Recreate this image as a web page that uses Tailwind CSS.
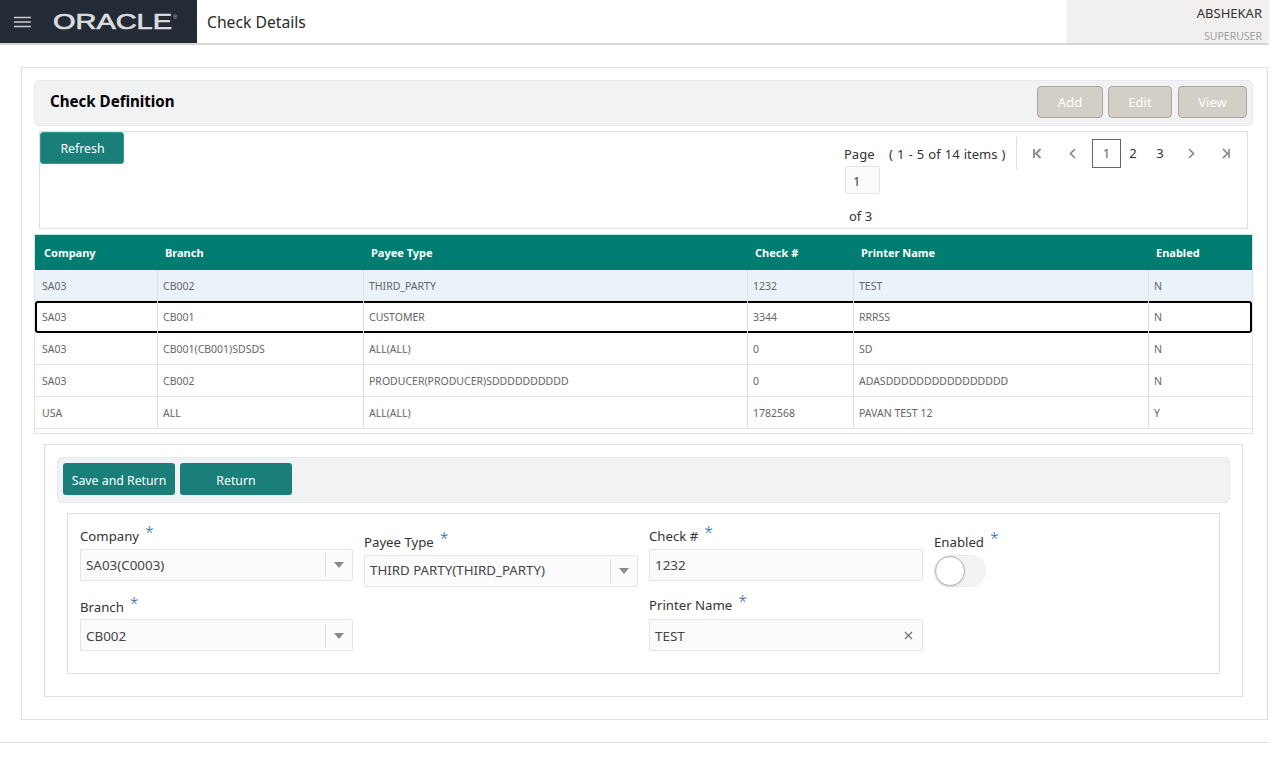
<!DOCTYPE html>
<html lang="en">
<head>
<meta charset="utf-8">
<title>Check Details</title>
<script src="https://cdn.jsdelivr.net/npm/@tailwindcss/browser@4"></script>
</head>
<body class="bg-white h-[782px] w-[1275px] overflow-hidden font-['Noto_Sans',sans-serif] text-[#333]">
<div class="w-[1269px]">
  <header class="flex h-[45px] border-b-2 border-[#d5d5d5]">
    <div class="w-[197px] bg-[#222b36] flex items-center">
      <svg class="ml-[14px] w-[17px] h-[12px]" viewBox="0 0 17 12"><path d="M0 1.5h17M0 6h17M0 10.5h17" stroke="#c9ccd0" stroke-width="1.6"/></svg>
      <svg class="ml-[22px] w-[128px] h-[24px]" viewBox="0 0 128 24"><text x="0" y="19" textLength="119" lengthAdjust="spacingAndGlyphs" font-family="Liberation Sans" font-weight="400" font-size="22" fill="#dcdcdc" stroke="#dcdcdc" stroke-width="0.7">ORACLE</text><text x="120" y="9" font-family="Liberation Sans" font-size="6" fill="#bbbbbb">®</text></svg>
    </div>
    <div class="flex-1 pl-[10px] pt-[9px] text-[15.7px] leading-[26px] text-[#2b2b2b]">Check Details</div>
    <div class="w-[202px] bg-[#f1f0ee] flex flex-col items-end pr-[7px]">
      <div class="text-[13px] leading-[18px] pt-[4px] text-[#333]">ABSHEKAR</div>
      <div class="text-[10.5px] leading-[14px] pt-[7px] text-[#a0a0a0]">SUPERUSER</div>
    </div>
  </header>
  <main class="mt-[22px] ml-[21px] w-[1247px] h-[653px] border border-[#dfdfdf] pt-[12px] pl-[12px]">
    <div class="w-[1219px] h-[46px] bg-[#f1f2f4] border border-[#e9e9ec] rounded-[5px] flex items-center justify-between pl-[15px] pr-[5px]">
      <h1 class="text-[15.1px] font-bold text-black -mt-[3px]">Check Definition</h1>
      <div class="flex gap-[5px] -mt-[2px]">
        <button class="w-[66px] h-[32px] pt-[1px] bg-[#d3cfc6] border border-[#a9a69e] rounded-[4px] text-white text-[13px]">Add</button>
        <button class="w-[64px] h-[32px] pt-[1px] bg-[#d3cfc6] border border-[#a9a69e] rounded-[4px] text-white text-[13px] mr-[1px]">Edit</button>
        <button class="w-[69px] h-[32px] pt-[1px] bg-[#d3cfc6] border border-[#a9a69e] rounded-[4px] text-white text-[13px]">View</button>
      </div>
    </div>
    <section class="mt-[5px] ml-[5px] w-[1209px] h-[98px] border border-[#dfdfdf] flex justify-between">
      <button class="w-[84px] h-[32px] pt-[2px] pl-[1px] bg-[#1b7f79] border border-[#2a9d94] rounded-[3px] text-white text-[12.3px]">Refresh</button>
      <div class="w-[403px] text-[13px] text-[#333] relative">
        <div class="flex h-[33px] mt-[5px]">
          <span class="w-[45px] pt-[7px] leading-[20px]">Page</span>
          <span class="w-[127px] pt-[7px] leading-[20px] [word-spacing:0.7px]">( 1 - 5 of 14 items )</span>
          <div class="w-[16px] border-l border-[#dfdfdf]"></div>
          <div class="flex items-start pt-[2px] text-[#8a8a8a]">
            <svg class="w-[12px] h-[29px]" viewBox="0 0 12 29"><path d="M2 10v9M8.5 10l-4.5 4.5 4.5 4.5" fill="none" stroke="#858585" stroke-width="1.8"/></svg>
            <svg class="ml-[23px] w-[12px] h-[29px]" viewBox="0 0 12 29"><path d="M8 10l-4.5 4.5L8 19" fill="none" stroke="#858585" stroke-width="1.6"/></svg>
            <span class="ml-[13px] w-[29px] h-[29px] border border-[#666] flex items-center justify-center text-[#666]">1</span>
            <span class="w-[24px] h-[29px] flex items-center justify-center text-[#333]">2</span>
            <span class="w-[30px] h-[29px] flex items-center justify-center text-[#333]">3</span>
            <svg class="ml-[10px] w-[12px] h-[29px]" viewBox="0 0 12 29"><path d="M4 10l4.5 4.5L4 19" fill="none" stroke="#858585" stroke-width="1.6"/></svg>
            <svg class="ml-[23px] w-[12px] h-[29px]" viewBox="0 0 12 29"><path d="M3 10l4.5 4.5L3 19M9 10v9" fill="none" stroke="#858585" stroke-width="1.6"/></svg>
          </div>
        </div>
        <div class="ml-[1px] -mt-[4px] w-[35px] h-[28px] bg-[#fbfbfd] border border-[#e4e4e4] rounded-[2px] pl-[7px] leading-[28px] text-[#444]">1</div>
        <div class="ml-[5px] mt-[12px] leading-[20px]">of 3</div>
      </div>
    </section>
    <section class="mt-[5px] w-[1219px] h-[200px] border-b border-x border-[#e2e2e2] border-t border-t-[#c5ebe6] text-[10.5px] text-[#666]">
      <div class="grid grid-cols-[123px_206px_384px_106px_295px_103px] h-[35px] bg-[#007d70] text-white font-bold text-[11px] items-center pt-[2px]">
        <span class="pl-[9px]">Company</span><span class="pl-[7px]">Branch</span><span class="pl-[7px]">Payee Type</span><span class="pl-[7px]">Check #</span><span class="pl-[7px]">Printer Name</span><span class="pl-[7px]">Enabled</span>
      </div>
      <div class="grid grid-cols-[123px_206px_384px_106px_295px_103px] h-[31px] bg-[#e9f3f9] items-center border-b border-[#e6e6e6] [&>span]:h-full [&>span]:flex [&>span]:items-center [&>span]:pl-[5px] [&>span]:pt-[4px] [&>span]:border-r [&>span]:border-[#dedede]">
        <span class="!pl-[7px]">SA03</span><span>CB002</span><span>THIRD_PARTY</span><span>1232</span><span>TEST</span><span class="!border-r-0">N</span>
      </div>
      <div class="relative grid grid-cols-[123px_206px_384px_106px_295px_103px] h-[32px] items-center ring-2 ring-inset ring-black rounded-[3px] [&>span]:h-full [&>span]:flex [&>span]:items-center [&>span]:pl-[5px] [&>span]:pt-[2px] [&>span]:border-r [&>span]:border-[#dedede]">
        <span class="!pl-[7px]">SA03</span><span>CB001</span><span>CUSTOMER</span><span>3344</span><span>RRRSS</span><span class="!border-r-0">N</span>
      </div>
      <div class="grid grid-cols-[123px_206px_384px_106px_295px_103px] h-[32px] items-center border-b border-[#e2e2e2] [&>span]:h-full [&>span]:flex [&>span]:items-center [&>span]:pl-[5px] [&>span]:pt-[2px] [&>span]:border-r [&>span]:border-[#dedede]">
        <span class="!pl-[7px]">SA03</span><span>CB001(CB001)SDSDS</span><span>ALL(ALL)</span><span>0</span><span>SD</span><span class="!border-r-0">N</span>
      </div>
      <div class="grid grid-cols-[123px_206px_384px_106px_295px_103px] h-[32px] items-center border-b border-[#e2e2e2] [&>span]:h-full [&>span]:flex [&>span]:items-center [&>span]:pl-[5px] [&>span]:pt-[2px] [&>span]:border-r [&>span]:border-[#dedede]">
        <span class="!pl-[7px]">SA03</span><span>CB002</span><span>PRODUCER(PRODUCER)SDDDDDDDDDD</span><span>0</span><span>ADASDDDDDDDDDDDDDDDD</span><span class="!border-r-0">N</span>
      </div>
      <div class="grid grid-cols-[123px_206px_384px_106px_295px_103px] h-[32px] items-center border-b border-[#e2e2e2] [&>span]:h-full [&>span]:flex [&>span]:items-center [&>span]:pl-[5px] [&>span]:pt-[2px] [&>span]:border-r [&>span]:border-[#dedede]">
        <span class="!pl-[7px]">USA</span><span>ALL</span><span>ALL(ALL)</span><span>1782568</span><span>PAVAN TEST 12</span><span class="!border-r-0">Y</span>
      </div>
    </section>
    <section class="mt-[10px] ml-[10px] w-[1199px] h-[253px] border border-[#dfdfdf] pt-[12px] pl-[12px]">
      <div class="w-[1173px] h-[46px] bg-[#f1f2f4] border border-[#e9e9ec] rounded-[5px] flex gap-[5px] pt-[5px] pl-[5px]">
        <button class="w-[112px] h-[32px] pt-[4px] bg-[#1b7f79] rounded-[3px] text-white text-[12.3px]">Save and Return</button>
        <button class="w-[112px] h-[32px] pt-[4px] bg-[#1b7f79] rounded-[3px] text-white text-[12.3px]">Return</button>
      </div>
      <div class="mt-[10px] ml-[10px] w-[1153px] h-[161px] border border-[#dfdfdf] pl-[12px] flex text-[13.2px] text-[#333]">
        <div class="w-[284px]">
          <div class="h-[35px] pt-[9px]"><span>Company</span><span class="relative -top-[3px] ml-[6px] text-[#2f6a9e] text-[16px] font-light">*</span></div>
          <div class="w-[273px] h-[32px] bg-[#fbfbfd] border border-[#e4e4e4] rounded-[2px] flex items-center pl-[5px] text-[#444] text-[13.4px]"><span class="flex-1 pt-[1px]">SA03(C0003)</span><span class="w-[27px] h-[24px] border-l border-[#dcdcdc] flex items-center justify-center"><svg class="w-[10px] h-[6px]" viewBox="0 0 10 6"><path d="M0 0h10L5 6z" fill="#8a8a8a"/></svg></span></div>
          <div class="h-[38px] pt-[13px]"><span>Branch</span><span class="relative -top-[3px] ml-[6px] text-[#2f6a9e] text-[16px] font-light">*</span></div>
          <div class="w-[273px] h-[32px] pt-[1px] bg-[#fbfbfd] border border-[#e4e4e4] rounded-[2px] flex items-center pl-[5px] text-[#444] text-[13.4px]"><span class="flex-1 pt-[1px]">CB002</span><span class="w-[27px] h-[24px] border-l border-[#dcdcdc] flex items-center justify-center"><svg class="w-[10px] h-[6px]" viewBox="0 0 10 6"><path d="M0 0h10L5 6z" fill="#8a8a8a"/></svg></span></div>
        </div>
        <div class="w-[285px]">
          <div class="h-[41px] pt-[15px]"><span>Payee Type</span><span class="relative -top-[3px] ml-[6px] text-[#2f6a9e] text-[16px] font-light">*</span></div>
          <div class="w-[274px] h-[32px] bg-[#fbfbfd] border border-[#e4e4e4] rounded-[2px] flex items-center pl-[5px] text-[#444] text-[13.3px]"><span class="flex-1">THIRD PARTY(THIRD_PARTY)</span><span class="w-[27px] h-[24px] border-l border-[#dcdcdc] flex items-center justify-center"><svg class="w-[10px] h-[6px]" viewBox="0 0 10 6"><path d="M0 0h10L5 6z" fill="#8a8a8a"/></svg></span></div>
        </div>
        <div class="w-[285px]">
          <div class="h-[35px] pt-[9px]"><span>Check #</span><span class="relative -top-[3px] ml-[6px] text-[#2f6a9e] text-[16px] font-light">*</span></div>
          <div class="w-[274px] h-[32px] bg-[#fbfbfd] border border-[#e4e4e4] rounded-[2px] flex items-center pl-[5px] text-[#444] text-[13.4px]">1232</div>
          <div class="h-[38px] pt-[11px]"><span>Printer Name</span><span class="relative -top-[3px] ml-[6px] text-[#2f6a9e] text-[16px] font-light">*</span></div>
          <div class="w-[274px] h-[32px] bg-[#fbfbfd] border border-[#e4e4e4] rounded-[2px] flex items-center pl-[5px] pr-[9px] text-[#444] text-[13.4px]"><span class="flex-1 pt-[2px]">TEST</span><svg class="w-[9px] h-[9px]" viewBox="0 0 9 9"><path d="M1 1l7 7M8 1l-7 7" stroke="#777" stroke-width="1.4"/></svg></div>
        </div>
        <div>
          <div class="h-[41px] pt-[15px]"><span>Enabled</span><span class="relative -top-[3px] ml-[6px] text-[#2f6a9e] text-[16px] font-light">*</span></div>
          <div class="w-[52px] h-[32px] rounded-full bg-[#f3f3f4] border border-[#ececec] relative"><span class="absolute left-0 top-0 w-[30px] h-[30px] rounded-full bg-white border border-[#b5b5b5] shadow-sm"></span></div>
        </div>
      </div>
    </section>
  </main>
  <div class="mt-[22px] border-t border-[#dfdfdf]"></div>
</div>
</body>
</html>
